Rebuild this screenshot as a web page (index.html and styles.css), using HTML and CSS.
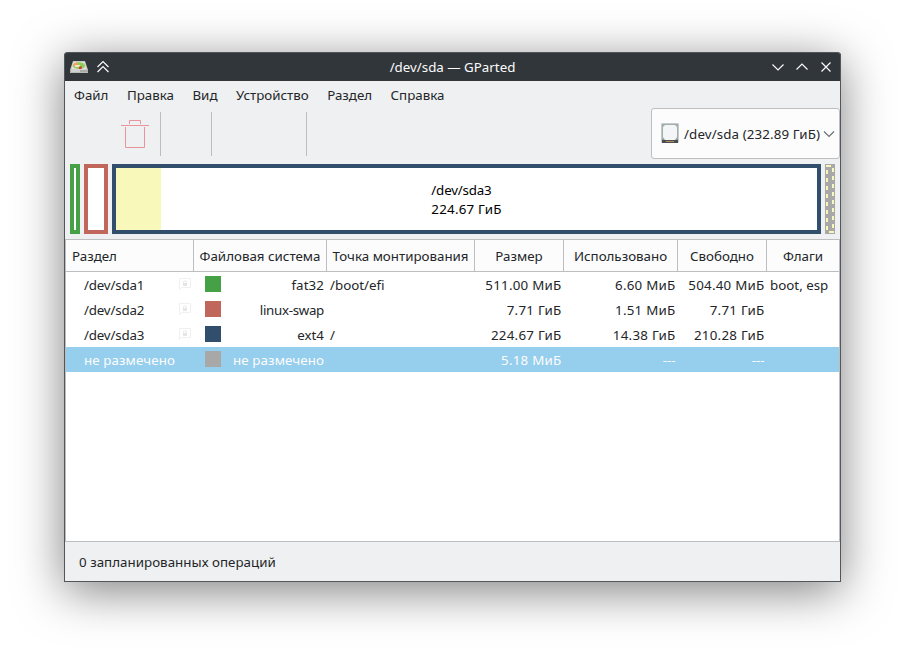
FILE: index.html
```html
<!DOCTYPE html>
<html lang="ru">
<head>
<meta charset="utf-8">
<title>/dev/sda — GParted</title>
<link rel="stylesheet" href="styles.css">
</head>
<body>
<svg class="defs" width="0" height="0" aria-hidden="true">
  <symbol id="lock" viewBox="0 0 12 12">
    <path d="M2.500 9.500h9v-9h-11v11l2-2" fill="none" stroke="#f0f0f0"/>
    <path d="M4 5h4v3H4z" fill="#e6e6e6"/><path d="M4.500 5V3.500q1.500-1.500 3 0V5" fill="none" stroke="#e9e9e9"/>
  </symbol>
</svg>
<main class="window">
  <header class="titlebar">
    <div class="left">
      <svg width="20" height="16" viewBox="0 0 20 16">
        <path d="M4 2h12l3 9v3H1v-3z" fill="#c9c9c6"/>
        <path d="M1 11h18v2.500H1z" fill="#aaaaa6"/>
        <path d="M4.500 3h11l2 7.500h-15z" fill="#dededb"/>
        <ellipse cx="10" cy="6.700" rx="6" ry="3.400" fill="#8ccf58"/>
        <path d="M10 6.700 4 7.500Q4 4 8 3.200z" fill="#f3a05a"/>
        <path d="M6 6h5v2H6z" fill="#e8ecc4"/>
        <path d="M10 7.500h3l-.5 2.500h-2.500z" fill="#cf3b35"/>
        <path d="M2 12h9" stroke="#f4f4f4"/>
      </svg>
      <svg width="14" height="14" viewBox="0 0 14 14" fill="none" stroke="#fcfcfc" stroke-width="1.200"><path d="m1.500 7 5.500-5.500L12.500 7M1.500 12 7 6.500l5.500 5.500"/></svg>
    </div>
    <h1>/dev/sda — GParted</h1>
    <div class="controls">
      <svg width="12" height="12" viewBox="0 0 12 12"><path d="M.5 3.500 6 9l5.500-5.500"/></svg>
      <svg width="12" height="12" viewBox="0 0 12 12"><path d="M.5 8.500 6 3l5.500 5.500"/></svg>
      <svg width="12" height="12" viewBox="0 0 12 12"><path d="m1.500 1.500 9 9m0-9-9 9"/></svg>
    </div>
  </header>
  <nav class="menu"><span>Файл</span><span>Правка</span><span>Вид</span><span>Устройство</span><span>Раздел</span><span>Справка</span></nav>
  <div class="toolbar">
    <div class="tools first">
      <svg width="28" height="28" viewBox="0 0 28 28" fill="none" stroke="#e9949b"><path d="M0 5.500h28M8.500 4V.5h11V4M4.500 7v20.500h19V7"/></svg>
    </div>
    <div class="tools second"></div>
    <div class="tools third"></div>
    <div class="device">
      <svg width="18" height="21" viewBox="0 0 18 21">
        <path d="M.5.5h17v19H.5z" fill="#8f9898"/><path d="M1 1h16v15H1z" fill="#a3adac"/>
        <path d="M4 2h10l2 2v10l-2 3H4l-2-3V4z" fill="#f3f5f6"/>
        <path d="M1 17h16v3H1z" fill="#4b4e50"/><path d="M5 18.500h8" stroke="#b58a55"/>
      </svg>
      <span>/dev/sda (232.89 ГиБ)</span>
      <svg class="arrow" width="12" height="8" viewBox="0 0 12 8"><path d="M1 1.500 6 6.500l5-5" fill="none" stroke="#6b6f72" stroke-width="1.200"/></svg>
    </div>
  </div>
  <section class="disk">
    <div class="part green"></div>
    <div class="part red"></div>
    <div class="part blue"><i class="used"></i><p><span class="device-name">/dev/sda3</span><br>224.67 ГиБ</p></div>
    <div class="part free"><svg width="10" height="70" viewBox="0 0 10 70"><path d="M2 6v62M8 4v62" fill="none" stroke="#f8f8ba" stroke-width="2" stroke-dasharray="4 4"/><path d="M1 2h5M4 68h5" stroke="#f8f8ba" stroke-width="2"/></svg></div>
  </section>
  <section class="table">
    <div class="row head"><div>Раздел</div><div>Файловая система</div><div>Точка монтирования</div><div>Размер</div><div>Использовано</div><div>Свободно</div><div>Флаги</div></div>
    <div class="row"><div class="name"><span class="device-name">/dev/sda1</span><svg width="12" height="12"><use href="#lock"/></svg></div><div class="fs"><i class="sw green-bg"></i><span class="fs-name">fat32</span></div><div class="mount">/boot/efi</div><div class="num">511.00 МиБ</div><div class="num">6.60 МиБ</div><div class="num">504.40 МиБ</div><div class="flags">boot, esp</div></div>
    <div class="row"><div class="name"><span class="device-name">/dev/sda2</span><svg width="12" height="12"><use href="#lock"/></svg></div><div class="fs"><i class="sw red-bg"></i><span class="swap">linux-swap</span></div><div class="mount"></div><div class="num">7.71 ГиБ</div><div class="num">1.51 МиБ</div><div class="num">7.71 ГиБ</div><div class="flags"></div></div>
    <div class="row"><div class="name"><span class="device-name">/dev/sda3</span><svg width="12" height="12"><use href="#lock"/></svg></div><div class="fs"><i class="sw blue-bg"></i>ext4</div><div class="mount">/</div><div class="num">224.67 ГиБ</div><div class="num">14.38 ГиБ</div><div class="num">210.28 ГиБ</div><div class="flags"></div></div>
    <div class="row selected"><div class="name"><span class="unallocated">не размечено</span></div><div class="fs"><i class="sw gray-bg"></i><span class="unallocated">не размечено</span></div><div class="mount"></div><div class="num">5.18 МиБ</div><div class="num dashes">---</div><div class="num dashes">---</div><div class="flags"></div></div>
  </section>
  <footer>0 запланированных операций</footer>
</main>
</body>
</html>
```
FILE: styles.css
```css
* { box-sizing: border-box; }
body { margin: 0; padding: 52px 64px; height: 658px; overflow: hidden; background: #fff; font: 13.333px/18px "Noto Sans", sans-serif; color: #232629; }
svg { display: block; flex: none; }
.defs { position: absolute; }
.window { width: 777px; height: 530px; border: 1px solid #50565c; border-top: 0; border-radius: 4px 4px 0 0; background: #eff0f1; display: flex; flex-direction: column; box-shadow: 0 9px 48px rgba(0,0,0,.5); }
.window > * { flex-shrink: 0; }
.titlebar { height: 29px; margin: 0 -1px; padding: 0 9px 0 5px; background: #31363b; border: 1px solid #50565c; border-bottom: 0; border-radius: 4px 4px 0 0; color: #fcfcfc; display: grid; grid-template-columns: 1fr auto 1fr; align-items: center; }
.left { display: flex; align-items: center; gap: 7px; margin-left: -1px; }
h1 { margin: 0; padding-left: 4px; font-size: 13.333px; font-weight: 400; }
.controls { display: flex; justify-content: flex-end; gap: 12px; margin-right: -1px; }
.controls path { fill: none; stroke: #fcfcfc; stroke-width: 1.2; }
.menu { height: 27px; padding: 5px 0 0 9px; display: flex; gap: 18.5px; }
.toolbar { height: 51px; display: flex; align-items: center; }
.tools { height: 44px; margin-top: 1px; border-right: 1px solid #bbbdbf; display: flex; align-items: center; }
.first { width: 96px; padding-left: 56px; }
.second { width: 51px; }
.third { width: 95px; }
.device { width: 189px; height: 51px; margin-left: auto; padding-left: 9px; border: 1px solid #bcbebf; border-radius: 3px; background: #fcfcfc; display: flex; align-items: center; white-space: nowrap; }
.device span { width: 136px; margin: 0 3px 0 5px; padding-top: 1px; letter-spacing: .12px; }
.disk { height: 80px; padding: 5px; display: flex; gap: 4px; }
.part { border: 4px solid; height: 70px; background: #fff; }
.green { width: 10px; border-color: #46a046; }
.red { width: 24px; border-color: #c0665a; }
.blue { width: 709px; border-color: #314e6c; display: grid; grid-template-columns: 45px 1fr; }
.used { background: #f8f8ba; grid-area: 1 / 1; }
.blue p { grid-area: 1 / 1 / 2 / 3; margin: 0; padding-top: 2px; place-self: center; color: #000; line-height: 19px; letter-spacing: .23px; }
.device-name { letter-spacing: -.18px; }
.swap { letter-spacing: -.3px; }
.fs-name { letter-spacing: .1px; }
.unallocated { letter-spacing: .1px; }
.free { width: 10px; border: 0; background: #a8a8a8; }
.table { height: 303px; border: 1px solid #bcbebf; background: #fff; }
.row { display: grid; grid-template-columns: 128px 133px 148px 89px 114px 89px 1fr; height: 25px; align-items: center; white-space: nowrap; }
.head { height: 32px; background: #fcfcfc; border-bottom: 1px solid #bcbebf; text-align: center; }
.head div { height: 31px; line-height: 33px; border-right: 1px solid #bcbebf; }
.head div:first-child { text-align: left; padding-left: 6px; }
.head div:last-child { border: 0; }
.name { display: flex; justify-content: space-between; align-items: center; padding: 1px 3px 0 18px; }
.name svg { position: relative; top: -1px; }
.fs { display: flex; justify-content: space-between; align-items: center; padding: 1px 3px 0 11px; }
.sw { width: 16px; height: 16px; margin-top: -2px; }
.green-bg { background: #46a046; }
.red-bg { background: #c0665a; }
.blue-bg { background: #314e6c; }
.gray-bg { background: #a8a8a8; }
.mount, .flags { padding: 1px 0 0 3px; }
.num { text-align: right; padding: 1px 2.5px 0 0; letter-spacing: .25px; }
.dashes { letter-spacing: 0; }
.selected { background: #96ceed; color: #fcfcfc; }
footer { padding: 11px 14px 0; letter-spacing: .03px; }
```
